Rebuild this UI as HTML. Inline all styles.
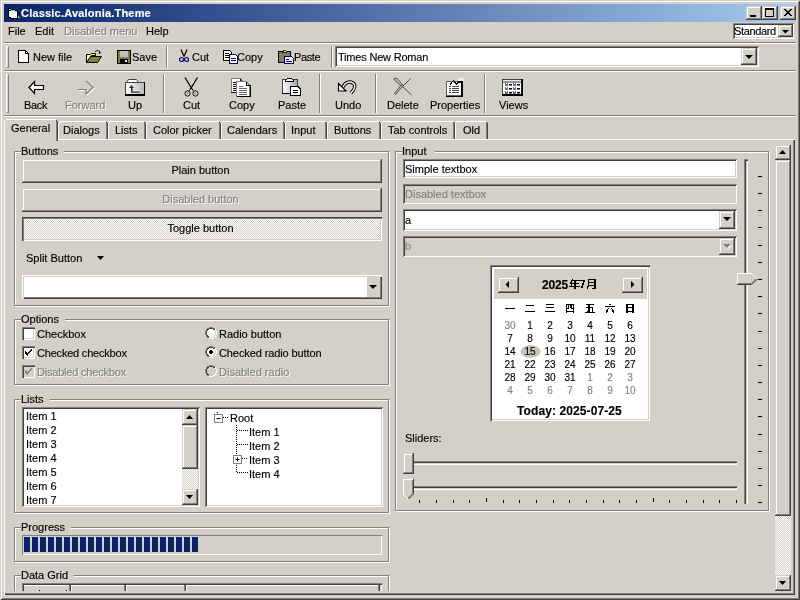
<!DOCTYPE html><html><head><meta charset="utf-8"><style>
*{box-sizing:border-box;margin:0;padding:0}
html,body{width:800px;height:600px;overflow:hidden;background:#d4d0c8}
body{position:relative;font-family:"Liberation Sans",sans-serif;font-size:11px;color:#000;line-height:1}
.a{position:absolute}
.t{position:absolute;white-space:nowrap;line-height:13px;will-change:transform;-webkit-text-stroke:0.15px currentColor}
.raised{background:#d4d0c8;box-shadow:inset -1px -1px #404040,inset 1px 1px #fff,inset -2px -2px #808080}
.raised2{background:#d4d0c8;box-shadow:inset -1px -1px #404040,inset 1px 1px #d4d0c8,inset -2px -2px #808080,inset 2px 2px #fff}
.sunken{background:#fff;box-shadow:inset 1px 1px #808080,inset -1px -1px #fff,inset 2px 2px #404040,inset -2px -2px #d4d0c8}
.etch{border:1px solid #808080;box-shadow:inset 1px 1px #fff,1px 1px #fff}
.dis{color:#808080;text-shadow:1px 1px #fff}
.gray{color:#808080}
.gl{position:absolute;background:#d4d0c8;padding:0 6px 0 0;will-change:transform;-webkit-text-stroke:0.15px currentColor;line-height:13px;white-space:nowrap}
.dither{background-color:#fff;background-image:linear-gradient(45deg,#d4d0c8 25%,transparent 25%,transparent 75%,#d4d0c8 75%),linear-gradient(45deg,#d4d0c8 25%,transparent 25%,transparent 75%,#d4d0c8 75%);background-size:2px 2px;background-position:0 0,1px 1px}
.vsep{position:absolute;width:2px;border-left:1px solid #808080;border-right:1px solid #fff}
.hsep{position:absolute;height:2px;border-top:1px solid #808080;border-bottom:1px solid #fff}
.grip{position:absolute;width:3px;border-left:1px solid #fff;border-top:1px solid #fff;border-right:1px solid #808080;border-bottom:1px solid #808080}
svg{position:absolute;overflow:visible}
</style></head><body>
<div class="a " style="left:0px;top:0px;width:800px;height:600px;box-shadow:inset 1px 1px #d4d0c8,inset -1px -1px #404040,inset 2px 2px #fff,inset -2px -2px #808080"></div>
<div class="a " style="left:4px;top:4px;width:792px;height:18px;background:linear-gradient(90deg,#0a246a,#a6caf0)"></div>
<div class="t " style="left:21px;top:7px;color:#fff;font-weight:bold;letter-spacing:0.2px">Classic.Avalonia.Theme</div>
<svg style="left:8px;top:8px" width="12" height="11" viewBox="0 0 12 11" shape-rendering="crispEdges"><rect x="0" y="0" width="1" height="1" fill="#000"/><rect x="1" y="0" width="1" height="1" fill="#000"/><rect x="2" y="0" width="1" height="1" fill="#000"/><rect x="0" y="1" width="1" height="1" fill="#000"/><rect x="1" y="1" width="1" height="1" fill="#7fd8d8"/><rect x="2" y="1" width="1" height="1" fill="#7fd8d8"/><rect x="3" y="1" width="1" height="1" fill="#000"/><rect x="4" y="1" width="1" height="1" fill="#000"/><rect x="5" y="1" width="1" height="1" fill="#000"/><rect x="6" y="1" width="1" height="1" fill="#000"/><rect x="0" y="2" width="1" height="1" fill="#000"/><rect x="1" y="2" width="1" height="1" fill="#000"/><rect x="2" y="2" width="1" height="1" fill="#000"/><rect x="3" y="2" width="1" height="1" fill="#7fd8d8"/><rect x="4" y="2" width="1" height="1" fill="#7fd8d8"/><rect x="5" y="2" width="1" height="1" fill="#7fd8d8"/><rect x="6" y="2" width="1" height="1" fill="#7fd8d8"/><rect x="7" y="2" width="1" height="1" fill="#000"/><rect x="8" y="2" width="1" height="1" fill="#000"/><rect x="0" y="3" width="1" height="1" fill="#000"/><rect x="1" y="3" width="1" height="1" fill="#fff"/><rect x="2" y="3" width="1" height="1" fill="#fff"/><rect x="3" y="3" width="1" height="1" fill="#fff"/><rect x="4" y="3" width="1" height="1" fill="#fff"/><rect x="5" y="3" width="1" height="1" fill="#fff"/><rect x="6" y="3" width="1" height="1" fill="#fff"/><rect x="7" y="3" width="1" height="1" fill="#7fd8d8"/><rect x="8" y="3" width="1" height="1" fill="#7fd8d8"/><rect x="9" y="3" width="1" height="1" fill="#000"/><rect x="0" y="4" width="1" height="1" fill="#000"/><rect x="1" y="4" width="1" height="1" fill="#fff"/><rect x="2" y="4" width="1" height="1" fill="#fff"/><rect x="3" y="4" width="1" height="1" fill="#fff"/><rect x="4" y="4" width="1" height="1" fill="#fff"/><rect x="5" y="4" width="1" height="1" fill="#fff"/><rect x="6" y="4" width="1" height="1" fill="#fff"/><rect x="7" y="4" width="1" height="1" fill="#fff"/><rect x="8" y="4" width="1" height="1" fill="#fff"/><rect x="9" y="4" width="1" height="1" fill="#000"/><rect x="0" y="5" width="1" height="1" fill="#000"/><rect x="1" y="5" width="1" height="1" fill="#fff"/><rect x="2" y="5" width="1" height="1" fill="#fff"/><rect x="3" y="5" width="1" height="1" fill="#fff"/><rect x="4" y="5" width="1" height="1" fill="#fff"/><rect x="5" y="5" width="1" height="1" fill="#fff"/><rect x="6" y="5" width="1" height="1" fill="#fff"/><rect x="7" y="5" width="1" height="1" fill="#fff"/><rect x="8" y="5" width="1" height="1" fill="#fff"/><rect x="9" y="5" width="1" height="1" fill="#000"/><rect x="0" y="6" width="1" height="1" fill="#000"/><rect x="1" y="6" width="1" height="1" fill="#fff"/><rect x="2" y="6" width="1" height="1" fill="#fff"/><rect x="3" y="6" width="1" height="1" fill="#fff"/><rect x="4" y="6" width="1" height="1" fill="#fff"/><rect x="5" y="6" width="1" height="1" fill="#fff"/><rect x="6" y="6" width="1" height="1" fill="#fff"/><rect x="7" y="6" width="1" height="1" fill="#fff"/><rect x="8" y="6" width="1" height="1" fill="#fff"/><rect x="9" y="6" width="1" height="1" fill="#000"/><rect x="0" y="7" width="1" height="1" fill="#000"/><rect x="1" y="7" width="1" height="1" fill="#fff"/><rect x="2" y="7" width="1" height="1" fill="#fff"/><rect x="3" y="7" width="1" height="1" fill="#fff"/><rect x="4" y="7" width="1" height="1" fill="#fff"/><rect x="5" y="7" width="1" height="1" fill="#fff"/><rect x="6" y="7" width="1" height="1" fill="#fff"/><rect x="7" y="7" width="1" height="1" fill="#fff"/><rect x="8" y="7" width="1" height="1" fill="#fff"/><rect x="9" y="7" width="1" height="1" fill="#000"/><rect x="0" y="8" width="1" height="1" fill="#000"/><rect x="1" y="8" width="1" height="1" fill="#fff"/><rect x="2" y="8" width="1" height="1" fill="#fff"/><rect x="3" y="8" width="1" height="1" fill="#fff"/><rect x="4" y="8" width="1" height="1" fill="#fff"/><rect x="5" y="8" width="1" height="1" fill="#fff"/><rect x="6" y="8" width="1" height="1" fill="#fff"/><rect x="7" y="8" width="1" height="1" fill="#fff"/><rect x="8" y="8" width="1" height="1" fill="#fff"/><rect x="9" y="8" width="1" height="1" fill="#000"/><rect x="10" y="8" width="1" height="1" fill="#9aa8d0"/><rect x="0" y="9" width="1" height="1" fill="#000"/><rect x="1" y="9" width="1" height="1" fill="#000"/><rect x="2" y="9" width="1" height="1" fill="#000"/><rect x="3" y="9" width="1" height="1" fill="#fff"/><rect x="4" y="9" width="1" height="1" fill="#fff"/><rect x="5" y="9" width="1" height="1" fill="#fff"/><rect x="6" y="9" width="1" height="1" fill="#fff"/><rect x="7" y="9" width="1" height="1" fill="#fff"/><rect x="8" y="9" width="1" height="1" fill="#fff"/><rect x="9" y="9" width="1" height="1" fill="#000"/><rect x="10" y="9" width="1" height="1" fill="#9aa8d0"/><rect x="11" y="9" width="1" height="1" fill="#9aa8d0"/><rect x="3" y="10" width="1" height="1" fill="#000"/><rect x="4" y="10" width="1" height="1" fill="#000"/><rect x="5" y="10" width="1" height="1" fill="#000"/><rect x="6" y="10" width="1" height="1" fill="#000"/><rect x="7" y="10" width="1" height="1" fill="#000"/><rect x="8" y="10" width="1" height="1" fill="#000"/><rect x="9" y="10" width="1" height="1" fill="#000"/></svg>
<div class="a raised2" style="left:746px;top:6px;width:16px;height:14px;"></div>
<div class="a raised2" style="left:762px;top:6px;width:16px;height:14px;"></div>
<div class="a raised2" style="left:780px;top:6px;width:16px;height:14px;"></div>
<svg style="left:746px;top:6px" width="16" height="14" viewBox="0 0 16 14" shape-rendering="crispEdges"><rect x="4" y="9" width="6" height="2" fill="#000"/></svg>
<svg style="left:762px;top:6px" width="16" height="14" viewBox="0 0 16 14" shape-rendering="crispEdges"><rect x="3.5" y="2.5" width="8" height="8" fill="none" stroke="#000"/><rect x="3" y="2" width="9" height="2" fill="#000"/></svg>
<svg style="left:780px;top:6px" width="16" height="14" viewBox="0 0 16 14" ><path d="M4 3l7 7M11 3l-7 7M5 3l7 7M12 3l-7 7" stroke="#000" stroke-width="1"/></svg>
<div class="t " style="left:8px;top:25px;">File</div>
<div class="t " style="left:35px;top:25px;">Edit</div>
<div class="t dis" style="left:64px;top:25px;">Disabled menu</div>
<div class="t " style="left:146px;top:25px;">Help</div>
<div class="a sunken" style="left:733px;top:23px;width:61px;height:16px;"></div>
<div class="t " style="left:734px;top:25px;letter-spacing:-0.35px">Standard</div>
<div class="a raised2" style="left:778px;top:25px;width:15px;height:12px;"></div>
<svg style="left:778px;top:25px" width="15" height="12" viewBox="0 0 15 12" ><path d="M4 5h7l-3.5 3.5z" fill="#000"/></svg>
<div class="hsep" style="left:4px;top:42px;width:792px"></div>
<div class="grip" style="left:6px;top:46px;height:22px"></div>
<svg style="left:18px;top:50px" width="12" height="13" viewBox="0 0 12 13" shape-rendering="crispEdges"><path d="M0.5 0.5h7l3 3v9h-10z" fill="#fff" stroke="#000"/><path d="M7.5 0.5v3h3" fill="none" stroke="#000"/></svg>
<div class="t " style="left:33px;top:51px;">New file</div>
<svg style="left:86px;top:50px" width="17" height="13" viewBox="0 0 17 13" ><path d="M0.5 4.5h4l1 -1h4v2h-4l-1 1v6h-4z" fill="#ffff99" stroke="#000"/><path d="M0.5 12.5l4-6h11l-4 6z" fill="#808040" stroke="#000"/><path d="M9 2c1-2 4-2 5 0" fill="none" stroke="#000"/><path d="M13 1l2 2l-2 1z" fill="#000"/></svg>
<svg style="left:117px;top:50px" width="14" height="14" viewBox="0 0 14 14" shape-rendering="crispEdges"><rect x="0.5" y="0.5" width="13" height="13" fill="#808040" stroke="#000"/><rect x="3" y="1" width="8" height="6" fill="#c0c0c0"/><rect x="3" y="9" width="8" height="4" fill="#000"/><rect x="8" y="10" width="2" height="2" fill="#fff"/></svg>
<div class="t " style="left:132px;top:51px;">Save</div>
<div class="vsep" style="left:166px;top:46px;height:22px"></div>
<svg style="left:179px;top:49px" width="10" height="14" viewBox="0 0 10 14" ><path d="M2 0.5l3 7M8 0.5l-3 7" stroke="#000" stroke-width="1.2"/><circle cx="2.5" cy="10.5" r="2" fill="none" stroke="#000080" stroke-width="1.2"/><circle cx="7.5" cy="10.5" r="2" fill="none" stroke="#000080" stroke-width="1.2"/></svg>
<div class="t " style="left:192px;top:51px;">Cut</div>
<svg style="left:223px;top:50px" width="16" height="14" viewBox="0 0 16 14" shape-rendering="crispEdges"><path d="M0.5 0.5h6l2 2v8h-8z" fill="#fff" stroke="#000"/><path d="M2 3h4M2 5h4M2 7h4" stroke="#000"/><path d="M6.5 4.5h6l2 2v7h-8z" fill="#fff" stroke="#000080"/><path d="M8 8h5M8 10h5" stroke="#000080"/></svg>
<div class="t " style="left:237px;top:51px;">Copy</div>
<svg style="left:278px;top:50px" width="17" height="14" viewBox="0 0 17 14" shape-rendering="crispEdges"><rect x="0.5" y="1.5" width="12" height="11" fill="#808060" stroke="#000"/><path d="M4 2.5h5l-1-2h-3z" fill="#ffffc0" stroke="#000" stroke-width="0.8"/><path d="M6.5 6.5h7l2 2v5h-9z" fill="#fff" stroke="#000080"/><path d="M8 9h3M8 11h6" stroke="#000080"/></svg>
<div class="t " style="left:294px;top:51px;letter-spacing:-0.4px">Paste</div>
<div class="vsep" style="left:331px;top:46px;height:22px"></div>
<div class="a sunken" style="left:335px;top:46px;width:424px;height:21px;"></div>
<div class="t " style="left:338px;top:51px;letter-spacing:-0.2px">Times New Roman</div>
<div class="a raised2" style="left:741px;top:48px;width:16px;height:17px;"></div>
<svg style="left:741px;top:48px" width="16" height="17" viewBox="0 0 16 17" ><path d="M4 7h8l-4 4z" fill="#000"/></svg>
<div class="hsep" style="left:4px;top:70px;width:792px"></div>
<div class="grip" style="left:6px;top:74px;height:39px"></div>
<svg style="left:28px;top:80px" width="16" height="15" viewBox="0 0 16 15" ><path d="M1 7.5l5.5-6v4h9v4h-9v4z" fill="#fff" stroke="#000" stroke-width="1.2"/></svg>
<div class="t " style="left:24px;top:99px;letter-spacing:-0.3px">Back</div>
<svg style="left:77px;top:80px" width="17" height="15" viewBox="0 0 17 15" ><path d="M1 9.5h8v4.5l7-6.5-7-6.5" fill="none" stroke="#fff" stroke-width="1.2" transform="translate(1,1)"/><path d="M1 9.5h8v4.5l7-6.5-7-6.5" fill="none" stroke="#808080" stroke-width="1.2"/></svg>
<div class="t dis" style="left:65px;top:99px;">Forward</div>
<svg style="left:125px;top:79px" width="21" height="17" viewBox="0 0 21 17" ><defs><linearGradient id="gu" x1="0" x2="1"><stop offset="0" stop-color="#fff"/><stop offset="1" stop-color="#b8b8b8"/></linearGradient></defs><path d="M1.5 3.5l2-3h8l2 3" fill="#fff" stroke="#404040"/><rect x="0.5" y="3.5" width="19" height="12" fill="url(#gu)" stroke="#404040"/><rect x="0" y="15" width="20" height="2" fill="#000"/><rect x="19" y="3" width="1" height="13" fill="#000"/><path d="M6.5 6L4 9h5z" fill="#333"/><rect x="6" y="9" width="1.5" height="4" fill="#333"/><rect x="6" y="12.5" width="8.5" height="1.2" fill="#333"/></svg>
<div class="t " style="left:128px;top:99px;">Up</div>
<div class="vsep" style="left:163px;top:74px;height:39px"></div>
<svg style="left:183px;top:77px" width="16" height="20" viewBox="0 0 16 20" ><path d="M2 0.5l7 11.5M14.5 0.5l-7 11.5" stroke="#000" stroke-width="1.3"/><path d="M7.8 11.5l-2 2.5M8.7 11.5l2 2.5" stroke="#000"/><circle cx="4.5" cy="16.5" r="2.6" fill="#fff" stroke="#000" stroke-width="1"/><circle cx="12.5" cy="16.5" r="2.6" fill="#fff" stroke="#000" stroke-width="1"/><rect x="3.5" y="15.5" width="2" height="2" fill="#777"/><rect x="11.5" y="15.5" width="2" height="2" fill="#777"/></svg>
<div class="t " style="left:183px;top:99px;">Cut</div>
<svg style="left:231px;top:78px" width="21" height="19" viewBox="0 0 21 19" shape-rendering="crispEdges"><path d="M0.5 0.5h8.5l3 3v10.5h-11.5z" fill="#fff" stroke="#808080"/><rect x="0" y="14" width="6" height="1" fill="#000"/><path d="M9 0.5v3h3" fill="none" stroke="#000"/><path d="M2 4.5h5M2 6.5h5M2 8.5h5M2 10.5h5M2 12.5h5" stroke="#000"/><path d="M5.5 3.5h9.5l3.5 3.5v11h-13z" fill="#fff" stroke="#808080"/><path d="M15 3.5v3.5h3.5" fill="none" stroke="#000"/><rect x="19" y="7" width="1.2" height="12" fill="#000"/><rect x="6" y="18" width="14" height="1.2" fill="#000"/><path d="M8 8.5h4M8 10.5h8M8 12.5h8M8 14.5h8M8 16.5h8" stroke="#666"/></svg>
<div class="t " style="left:229px;top:99px;">Copy</div>
<svg style="left:282px;top:78px" width="20" height="18" viewBox="0 0 20 18" shape-rendering="crispEdges"><defs><linearGradient id="gp" x1="0" x2="1"><stop offset="0" stop-color="#fff"/><stop offset="1" stop-color="#a8a8a8"/></linearGradient></defs><rect x="0.5" y="1.5" width="14.5" height="13.5" fill="url(#gp)" stroke="#404040"/><rect x="0" y="14.5" width="15.5" height="1" fill="#000"/><path d="M3.5 3.5v-1l2-2h4l2 2v1z" fill="#fff" stroke="#000"/><path d="M8.5 8.5h7.5l2 2v7h-9.5z" fill="#fff" stroke="#000"/><path d="M10.5 12h5M10.5 14h5" stroke="#000"/></svg>
<div class="t " style="left:278px;top:99px;">Paste</div>
<div class="vsep" style="left:319px;top:74px;height:39px"></div>
<svg style="left:337px;top:79px" width="20" height="16" viewBox="0 0 20 16" ><path d="M6 8c2-5 7-6 10-4 3 2 2 6-2 10" fill="none" stroke="#000" stroke-width="3.4"/><path d="M6 8c2-5 7-6 10-4 3 2 2 6-2 10" fill="none" stroke="#fff" stroke-width="1.4"/><path d="M1.5 4.5v7.5h7.5z" fill="#fff" stroke="#000" stroke-width="1.2"/></svg>
<div class="t " style="left:335px;top:99px;">Undo</div>
<div class="vsep" style="left:375px;top:74px;height:39px"></div>
<svg style="left:393px;top:77px" width="20" height="19" viewBox="0 0 20 19" ><path d="M9.5 9.5l9 8.5" stroke="#444" stroke-width="1"/><path d="M9.5 9.5l8-8" stroke="#444" stroke-width="1"/><path d="M1 1.5c1.5-1 3 0 4 1l5.5 6.5-1 1-6.5-5.5c-1-1-2.5-2-2-3z" fill="#bbb" stroke="#444" stroke-width="0.9"/><path d="M9.5 9.5l-7 8-1-1 6.5-8.5z" fill="#bbb" stroke="#444" stroke-width="0.9"/></svg>
<div class="t " style="left:387px;top:99px;">Delete</div>
<svg style="left:446px;top:78px" width="19" height="19" viewBox="0 0 19 19" shape-rendering="crispEdges"><rect x="0.5" y="3.5" width="15" height="14" fill="#fff" stroke="#606060"/><rect x="15" y="4" width="1.5" height="15" fill="#000"/><rect x="0" y="17.5" width="16.5" height="1.5" fill="#000"/><path d="M4 6.5l3.5-4 3 3.5 2-2h4.5" fill="none" stroke="#000" stroke-width="1.1"/><rect x="12" y="0" width="6" height="3" fill="#f0f0f0"/><path d="M3 8.5h2M6 8.5h7M3 10.5h2M6 10.5h7M3 12.5h2M6 12.5h7M3 14.5h2M6 14.5h7" stroke="#444"/></svg>
<div class="t " style="left:430px;top:99px;">Properties</div>
<div class="vsep" style="left:484px;top:74px;height:39px"></div>
<svg style="left:502px;top:79px" width="21" height="17" viewBox="0 0 21 17" ><rect x="0.5" y="0.5" width="19" height="15" fill="#fff" stroke="#404040"/><rect x="1" y="1" width="18" height="1" fill="#e8e8e8"/><rect x="1" y="2" width="18" height="1" fill="#a0a0a0"/><rect x="1" y="3" width="18" height="0.6" fill="#404040"/><rect x="19.5" y="0" width="1.5" height="17" fill="#000"/><rect x="0" y="15" width="21" height="2" fill="#000"/><rect x="3" y="4" width="3" height="3" fill="#707070"/><rect x="4" y="4" width="1" height="1" fill="#fff"/><rect x="7" y="5" width="3" height="1.5" fill="#000"/><rect x="3" y="8" width="3" height="3" fill="#707070"/><rect x="4" y="8" width="1" height="1" fill="#fff"/><rect x="7" y="9" width="3" height="1.5" fill="#000"/><rect x="3" y="12" width="3" height="3" fill="#707070"/><rect x="4" y="12" width="1" height="1" fill="#fff"/><rect x="7" y="13" width="3" height="1.5" fill="#000"/><rect x="11" y="4" width="3" height="3" fill="#707070"/><rect x="12" y="4" width="1" height="1" fill="#fff"/><rect x="15" y="5" width="3" height="1.5" fill="#000"/><rect x="11" y="8" width="3" height="3" fill="#707070"/><rect x="12" y="8" width="1" height="1" fill="#fff"/><rect x="15" y="9" width="3" height="1.5" fill="#000"/><rect x="11" y="12" width="3" height="3" fill="#707070"/><rect x="12" y="12" width="1" height="1" fill="#fff"/><rect x="15" y="13" width="3" height="1.5" fill="#000"/></svg>
<div class="t " style="left:499px;top:99px;">Views</div>
<div class="hsep" style="left:4px;top:115px;width:792px"></div>
<svg style="left:58px;top:121px" width="50" height="18" viewBox="0 0 50 18" shape-rendering="crispEdges"><rect x="0" y="2" width="1" height="16" fill="#fff"/><rect x="1" y="1" width="1" height="1" fill="#fff"/><rect x="2" y="0" width="46" height="1" fill="#fff"/><rect x="48" y="1" width="1" height="1" fill="#404040"/><rect x="48" y="2" width="1" height="16" fill="#808080"/><rect x="49" y="2" width="1" height="16" fill="#404040"/></svg>
<div class="t " style="left:63px;top:124px;">Dialogs</div>
<svg style="left:108px;top:121px" width="38" height="18" viewBox="0 0 38 18" shape-rendering="crispEdges"><rect x="0" y="2" width="1" height="16" fill="#fff"/><rect x="1" y="1" width="1" height="1" fill="#fff"/><rect x="2" y="0" width="34" height="1" fill="#fff"/><rect x="36" y="1" width="1" height="1" fill="#404040"/><rect x="36" y="2" width="1" height="16" fill="#808080"/><rect x="37" y="2" width="1" height="16" fill="#404040"/></svg>
<div class="t " style="left:115px;top:124px;">Lists</div>
<svg style="left:146px;top:121px" width="75" height="18" viewBox="0 0 75 18" shape-rendering="crispEdges"><rect x="0" y="2" width="1" height="16" fill="#fff"/><rect x="1" y="1" width="1" height="1" fill="#fff"/><rect x="2" y="0" width="71" height="1" fill="#fff"/><rect x="73" y="1" width="1" height="1" fill="#404040"/><rect x="73" y="2" width="1" height="16" fill="#808080"/><rect x="74" y="2" width="1" height="16" fill="#404040"/></svg>
<div class="t " style="left:153px;top:124px;">Color picker</div>
<svg style="left:221px;top:121px" width="64" height="18" viewBox="0 0 64 18" shape-rendering="crispEdges"><rect x="0" y="2" width="1" height="16" fill="#fff"/><rect x="1" y="1" width="1" height="1" fill="#fff"/><rect x="2" y="0" width="60" height="1" fill="#fff"/><rect x="62" y="1" width="1" height="1" fill="#404040"/><rect x="62" y="2" width="1" height="16" fill="#808080"/><rect x="63" y="2" width="1" height="16" fill="#404040"/></svg>
<div class="t " style="left:227px;top:124px;">Calendars</div>
<svg style="left:285px;top:121px" width="42" height="18" viewBox="0 0 42 18" shape-rendering="crispEdges"><rect x="0" y="2" width="1" height="16" fill="#fff"/><rect x="1" y="1" width="1" height="1" fill="#fff"/><rect x="2" y="0" width="38" height="1" fill="#fff"/><rect x="40" y="1" width="1" height="1" fill="#404040"/><rect x="40" y="2" width="1" height="16" fill="#808080"/><rect x="41" y="2" width="1" height="16" fill="#404040"/></svg>
<div class="t " style="left:291px;top:124px;">Input</div>
<svg style="left:327px;top:121px" width="54" height="18" viewBox="0 0 54 18" shape-rendering="crispEdges"><rect x="0" y="2" width="1" height="16" fill="#fff"/><rect x="1" y="1" width="1" height="1" fill="#fff"/><rect x="2" y="0" width="50" height="1" fill="#fff"/><rect x="52" y="1" width="1" height="1" fill="#404040"/><rect x="52" y="2" width="1" height="16" fill="#808080"/><rect x="53" y="2" width="1" height="16" fill="#404040"/></svg>
<div class="t " style="left:334px;top:124px;">Buttons</div>
<svg style="left:381px;top:121px" width="74" height="18" viewBox="0 0 74 18" shape-rendering="crispEdges"><rect x="0" y="2" width="1" height="16" fill="#fff"/><rect x="1" y="1" width="1" height="1" fill="#fff"/><rect x="2" y="0" width="70" height="1" fill="#fff"/><rect x="72" y="1" width="1" height="1" fill="#404040"/><rect x="72" y="2" width="1" height="16" fill="#808080"/><rect x="73" y="2" width="1" height="16" fill="#404040"/></svg>
<div class="t " style="left:388px;top:124px;">Tab controls</div>
<svg style="left:455px;top:121px" width="33" height="18" viewBox="0 0 33 18" shape-rendering="crispEdges"><rect x="0" y="2" width="1" height="16" fill="#fff"/><rect x="1" y="1" width="1" height="1" fill="#fff"/><rect x="2" y="0" width="29" height="1" fill="#fff"/><rect x="31" y="1" width="1" height="1" fill="#404040"/><rect x="31" y="2" width="1" height="16" fill="#808080"/><rect x="32" y="2" width="1" height="16" fill="#404040"/></svg>
<div class="t " style="left:463px;top:124px;">Old</div>
<div class="a" style="left:4px;top:139px;width:791px;height:456px;border-top:1px solid #fff;border-left:1px solid #fff;box-shadow:inset -1px -1px #404040,inset -2px -2px #808080"></div>
<svg style="left:4px;top:119px" width="54" height="22" viewBox="0 0 54 22" shape-rendering="crispEdges"><rect x="0" y="0" width="54" height="22" fill="#d4d0c8"/><rect x="0" y="2" width="1" height="20" fill="#fff"/><rect x="1" y="1" width="1" height="1" fill="#fff"/><rect x="2" y="0" width="50" height="1" fill="#fff"/><rect x="52" y="1" width="1" height="1" fill="#404040"/><rect x="52" y="2" width="1" height="20" fill="#808080"/><rect x="53" y="2" width="1" height="20" fill="#404040"/></svg>
<div class="t " style="left:11px;top:122px;">General</div>
<div class="a" style="left:0;top:0;width:800px;height:600px;clip-path:inset(140px 6px 9px 5px)">
<div class="a etch" style="left:14px;top:151px;width:375px;height:155px;"></div>
<div class="gl" style="left:21px;top:145px;padding-right:6px">Buttons</div>
<div class="a etch" style="left:14px;top:319px;width:375px;height:66px;"></div>
<div class="gl" style="left:21px;top:313px;padding-right:6px">Options</div>
<div class="a etch" style="left:14px;top:399px;width:375px;height:114px;"></div>
<div class="gl" style="left:21px;top:393px;padding-right:6px">Lists</div>
<div class="a etch" style="left:14px;top:527px;width:375px;height:35px;"></div>
<div class="gl" style="left:21px;top:521px;padding-right:6px">Progress</div>
<div class="a etch" style="left:14px;top:575px;width:375px;height:40px;"></div>
<div class="gl" style="left:21px;top:569px;padding-right:6px">Data Grid</div>
<div class="a etch" style="left:395px;top:151px;width:374px;height:360px;"></div>
<div class="gl" style="left:402px;top:145px;padding-right:9px">Input</div>
<div class="a raised2" style="left:22px;top:159px;width:360px;height:24px;"></div>
<div class="t " style="left:22px;top:164px;width:357px;text-align:center">Plain button</div>
<div class="a raised2" style="left:22px;top:188px;width:360px;height:24px;"></div>
<div class="t dis" style="left:22px;top:193px;width:357px;text-align:center">Disabled button</div>
<div class="a dither" style="left:22px;top:217px;width:360px;height:24px;box-shadow:inset 1px 1px #404040,inset 2px 2px #808080,inset -1px -1px #fff,inset -2px -2px #d4d0c8"></div>
<div class="t " style="left:22px;top:222px;width:357px;text-align:center">Toggle button</div>
<div class="t " style="left:26px;top:252px;">Split Button</div>
<svg style="left:97px;top:256px" width="8" height="5" viewBox="0 0 8 5" ><path d="M0 0h7l-3.5 4z" fill="#000"/></svg>
<div class="a " style="left:22px;top:275px;width:360px;height:24px;background:#fff;box-shadow:inset 1px 1px #fff,inset 2px 2px #d4d0c8,inset -1px -1px #404040,inset -2px -2px #808080"></div>
<div class="a " style="left:367px;top:277px;width:13px;height:20px;background:#d4d0c8"></div>
<svg style="left:369px;top:285px" width="8" height="5" viewBox="0 0 8 5" ><path d="M0 0h8l-4 4z" fill="#000"/></svg>
<div class="a " style="left:22px;top:327px;width:13px;height:13px;background:#fff;box-shadow:inset 1px 1px #808080,inset 2px 2px #404040,inset -1px -1px #fff,inset -2px -2px #d4d0c8"></div>
<div class="t " style="left:37px;top:328px;">Checkbox</div>
<div class="a " style="left:22px;top:346px;width:13px;height:13px;background:#fff;box-shadow:inset 1px 1px #808080,inset 2px 2px #404040,inset -1px -1px #fff,inset -2px -2px #d4d0c8"></div>
<svg style="left:22px;top:346px" width="13" height="13" viewBox="0 0 13 13" shape-rendering="crispEdges"><rect x="9" y="3" width="1" height="1" fill="#000"/><rect x="8" y="4" width="1" height="1" fill="#000"/><rect x="9" y="4" width="1" height="1" fill="#000"/><rect x="3" y="5" width="1" height="1" fill="#000"/><rect x="7" y="5" width="1" height="1" fill="#000"/><rect x="8" y="5" width="1" height="1" fill="#000"/><rect x="3" y="6" width="1" height="1" fill="#000"/><rect x="4" y="6" width="1" height="1" fill="#000"/><rect x="6" y="6" width="1" height="1" fill="#000"/><rect x="7" y="6" width="1" height="1" fill="#000"/><rect x="3" y="7" width="1" height="1" fill="#000"/><rect x="4" y="7" width="1" height="1" fill="#000"/><rect x="5" y="7" width="1" height="1" fill="#000"/><rect x="6" y="7" width="1" height="1" fill="#000"/><rect x="4" y="8" width="1" height="1" fill="#000"/><rect x="5" y="8" width="1" height="1" fill="#000"/><rect x="5" y="9" width="1" height="1" fill="#000"/></svg>
<div class="t " style="left:37px;top:347px;letter-spacing:-0.2px">Checked checkbox</div>
<div class="a " style="left:22px;top:365px;width:13px;height:13px;background:#d4d0c8;box-shadow:inset 1px 1px #808080,inset 2px 2px #404040,inset -1px -1px #fff,inset -2px -2px #d4d0c8"></div>
<svg style="left:22px;top:365px" width="13" height="13" viewBox="0 0 13 13" shape-rendering="crispEdges"><rect x="9" y="3" width="1" height="1" fill="#808080"/><rect x="8" y="4" width="1" height="1" fill="#808080"/><rect x="9" y="4" width="1" height="1" fill="#808080"/><rect x="3" y="5" width="1" height="1" fill="#808080"/><rect x="7" y="5" width="1" height="1" fill="#808080"/><rect x="8" y="5" width="1" height="1" fill="#808080"/><rect x="3" y="6" width="1" height="1" fill="#808080"/><rect x="4" y="6" width="1" height="1" fill="#808080"/><rect x="6" y="6" width="1" height="1" fill="#808080"/><rect x="7" y="6" width="1" height="1" fill="#808080"/><rect x="3" y="7" width="1" height="1" fill="#808080"/><rect x="4" y="7" width="1" height="1" fill="#808080"/><rect x="5" y="7" width="1" height="1" fill="#808080"/><rect x="6" y="7" width="1" height="1" fill="#808080"/><rect x="4" y="8" width="1" height="1" fill="#808080"/><rect x="5" y="8" width="1" height="1" fill="#808080"/><rect x="5" y="9" width="1" height="1" fill="#808080"/></svg>
<div class="t dis" style="left:37px;top:366px;letter-spacing:-0.2px">Disabled checkbox</div>
<svg style="left:205px;top:327px" width="12" height="12" viewBox="0 0 12 12" shape-rendering="crispEdges"><rect x="2" y="2" width="8" height="8" fill="#fff"/><rect x="3" y="1" width="6" height="10" fill="#fff"/><rect x="1" y="3" width="10" height="6" fill="#fff"/><rect x="4" y="0" width="4" height="1" fill="#808080"/><rect x="2" y="1" width="2" height="1" fill="#808080"/><rect x="8" y="1" width="2" height="1" fill="#808080"/><rect x="1" y="2" width="1" height="2" fill="#808080"/><rect x="0" y="4" width="1" height="4" fill="#808080"/><rect x="1" y="8" width="1" height="2" fill="#808080"/><rect x="2" y="10" width="2" height="1" fill="#808080"/><rect x="10" y="2" width="1" height="2" fill="#fff"/><rect x="11" y="4" width="1" height="4" fill="#fff"/><rect x="10" y="8" width="1" height="2" fill="#fff"/><rect x="8" y="10" width="2" height="1" fill="#fff"/><rect x="4" y="11" width="4" height="1" fill="#fff"/><rect x="4" y="1" width="4" height="1" fill="#404040"/><rect x="2" y="2" width="2" height="1" fill="#404040"/><rect x="8" y="2" width="2" height="1" fill="#404040"/><rect x="2" y="3" width="1" height="1" fill="#404040"/><rect x="1" y="4" width="1" height="4" fill="#404040"/><rect x="2" y="8" width="1" height="1" fill="#404040"/><rect x="2" y="9" width="2" height="1" fill="#404040"/><rect x="9" y="3" width="1" height="1" fill="#d4d0c8"/><rect x="10" y="4" width="1" height="4" fill="#d4d0c8"/><rect x="9" y="8" width="1" height="1" fill="#d4d0c8"/><rect x="8" y="9" width="2" height="1" fill="#d4d0c8"/><rect x="4" y="10" width="4" height="1" fill="#d4d0c8"/></svg>
<div class="t " style="left:219px;top:328px;">Radio button</div>
<svg style="left:205px;top:346px" width="12" height="12" viewBox="0 0 12 12" shape-rendering="crispEdges"><rect x="2" y="2" width="8" height="8" fill="#fff"/><rect x="3" y="1" width="6" height="10" fill="#fff"/><rect x="1" y="3" width="10" height="6" fill="#fff"/><rect x="4" y="0" width="4" height="1" fill="#808080"/><rect x="2" y="1" width="2" height="1" fill="#808080"/><rect x="8" y="1" width="2" height="1" fill="#808080"/><rect x="1" y="2" width="1" height="2" fill="#808080"/><rect x="0" y="4" width="1" height="4" fill="#808080"/><rect x="1" y="8" width="1" height="2" fill="#808080"/><rect x="2" y="10" width="2" height="1" fill="#808080"/><rect x="10" y="2" width="1" height="2" fill="#fff"/><rect x="11" y="4" width="1" height="4" fill="#fff"/><rect x="10" y="8" width="1" height="2" fill="#fff"/><rect x="8" y="10" width="2" height="1" fill="#fff"/><rect x="4" y="11" width="4" height="1" fill="#fff"/><rect x="4" y="1" width="4" height="1" fill="#404040"/><rect x="2" y="2" width="2" height="1" fill="#404040"/><rect x="8" y="2" width="2" height="1" fill="#404040"/><rect x="2" y="3" width="1" height="1" fill="#404040"/><rect x="1" y="4" width="1" height="4" fill="#404040"/><rect x="2" y="8" width="1" height="1" fill="#404040"/><rect x="2" y="9" width="2" height="1" fill="#404040"/><rect x="9" y="3" width="1" height="1" fill="#d4d0c8"/><rect x="10" y="4" width="1" height="4" fill="#d4d0c8"/><rect x="9" y="8" width="1" height="1" fill="#d4d0c8"/><rect x="8" y="9" width="2" height="1" fill="#d4d0c8"/><rect x="4" y="10" width="4" height="1" fill="#d4d0c8"/><rect x="5" y="4" width="2" height="1" fill="#000"/><rect x="4" y="5" width="4" height="2" fill="#000"/><rect x="5" y="7" width="2" height="1" fill="#000"/></svg>
<div class="t " style="left:219px;top:347px;letter-spacing:-0.1px">Checked radio button</div>
<svg style="left:205px;top:365px" width="12" height="12" viewBox="0 0 12 12" shape-rendering="crispEdges"><rect x="2" y="2" width="8" height="8" fill="#d4d0c8"/><rect x="3" y="1" width="6" height="10" fill="#d4d0c8"/><rect x="1" y="3" width="10" height="6" fill="#d4d0c8"/><rect x="4" y="0" width="4" height="1" fill="#808080"/><rect x="2" y="1" width="2" height="1" fill="#808080"/><rect x="8" y="1" width="2" height="1" fill="#808080"/><rect x="1" y="2" width="1" height="2" fill="#808080"/><rect x="0" y="4" width="1" height="4" fill="#808080"/><rect x="1" y="8" width="1" height="2" fill="#808080"/><rect x="2" y="10" width="2" height="1" fill="#808080"/><rect x="10" y="2" width="1" height="2" fill="#fff"/><rect x="11" y="4" width="1" height="4" fill="#fff"/><rect x="10" y="8" width="1" height="2" fill="#fff"/><rect x="8" y="10" width="2" height="1" fill="#fff"/><rect x="4" y="11" width="4" height="1" fill="#fff"/><rect x="4" y="1" width="4" height="1" fill="#404040"/><rect x="2" y="2" width="2" height="1" fill="#404040"/><rect x="8" y="2" width="2" height="1" fill="#404040"/><rect x="2" y="3" width="1" height="1" fill="#404040"/><rect x="1" y="4" width="1" height="4" fill="#404040"/><rect x="2" y="8" width="1" height="1" fill="#404040"/><rect x="2" y="9" width="2" height="1" fill="#404040"/><rect x="9" y="3" width="1" height="1" fill="#d4d0c8"/><rect x="10" y="4" width="1" height="4" fill="#d4d0c8"/><rect x="9" y="8" width="1" height="1" fill="#d4d0c8"/><rect x="8" y="9" width="2" height="1" fill="#d4d0c8"/><rect x="4" y="10" width="4" height="1" fill="#d4d0c8"/></svg>
<div class="t dis" style="left:219px;top:366px;">Disabled radio</div>
<div class="a sunken" style="left:22px;top:407px;width:178px;height:100px;"></div>
<div class="t " style="left:26px;top:410px;">Item 1</div>
<div class="t " style="left:26px;top:424px;">Item 2</div>
<div class="t " style="left:26px;top:438px;">Item 3</div>
<div class="t " style="left:26px;top:452px;">Item 4</div>
<div class="t " style="left:26px;top:466px;">Item 5</div>
<div class="t " style="left:26px;top:480px;">Item 6</div>
<div class="t " style="left:26px;top:494px;">Item 7</div>
<div class="a dither" style="left:182px;top:409px;width:16px;height:96px;"></div>
<div class="a raised2" style="left:182px;top:409px;width:16px;height:16px;"></div>
<svg style="left:182px;top:409px" width="16" height="16" viewBox="0 0 16 16" ><path d="M4 10h7l-3.5-4z" fill="#000"/></svg>
<div class="a raised2" style="left:182px;top:425px;width:16px;height:44px;"></div>
<div class="a raised2" style="left:182px;top:489px;width:16px;height:16px;"></div>
<svg style="left:182px;top:489px" width="16" height="16" viewBox="0 0 16 16" ><path d="M4 6h7l-3.5 4z" fill="#000"/></svg>
<div class="a sunken" style="left:205px;top:407px;width:178px;height:100px;"></div>
<svg style="left:205px;top:407px" width="178" height="100" viewBox="0 0 178 100" ><g stroke="#000" stroke-dasharray="1 1" fill="none"><path d="M12.5 5v2M31.5 18v48M32 23.5h11M32 37.5h11M37 51.5h6M32 65.5h11M18 10.5h6"/></g><rect x="9.5" y="7.5" width="8" height="8" fill="#fff" stroke="#808080"/><path d="M11.5 11.5h4" stroke="#000"/><rect x="28.5" y="48.5" width="8" height="8" fill="#fff" stroke="#808080"/><path d="M30.5 52.5h4M32.5 50.5v4" stroke="#000"/></svg>
<div class="t " style="left:230px;top:412px;">Root</div>
<div class="t " style="left:249px;top:426px;">Item 1</div>
<div class="t " style="left:249px;top:440px;">Item 2</div>
<div class="t " style="left:249px;top:454px;">Item 3</div>
<div class="t " style="left:249px;top:468px;">Item 4</div>
<div class="a " style="left:22px;top:535px;width:360px;height:20px;box-shadow:inset 1px 1px #808080,inset -1px -1px #fff"></div>
<div class="a " style="left:24px;top:537px;width:6px;height:15px;background:#0a246a"></div>
<div class="a " style="left:32px;top:537px;width:6px;height:15px;background:#0a246a"></div>
<div class="a " style="left:40px;top:537px;width:6px;height:15px;background:#0a246a"></div>
<div class="a " style="left:48px;top:537px;width:6px;height:15px;background:#0a246a"></div>
<div class="a " style="left:56px;top:537px;width:6px;height:15px;background:#0a246a"></div>
<div class="a " style="left:64px;top:537px;width:6px;height:15px;background:#0a246a"></div>
<div class="a " style="left:72px;top:537px;width:6px;height:15px;background:#0a246a"></div>
<div class="a " style="left:80px;top:537px;width:6px;height:15px;background:#0a246a"></div>
<div class="a " style="left:88px;top:537px;width:6px;height:15px;background:#0a246a"></div>
<div class="a " style="left:96px;top:537px;width:6px;height:15px;background:#0a246a"></div>
<div class="a " style="left:104px;top:537px;width:6px;height:15px;background:#0a246a"></div>
<div class="a " style="left:112px;top:537px;width:6px;height:15px;background:#0a246a"></div>
<div class="a " style="left:120px;top:537px;width:6px;height:15px;background:#0a246a"></div>
<div class="a " style="left:128px;top:537px;width:6px;height:15px;background:#0a246a"></div>
<div class="a " style="left:136px;top:537px;width:6px;height:15px;background:#0a246a"></div>
<div class="a " style="left:144px;top:537px;width:6px;height:15px;background:#0a246a"></div>
<div class="a " style="left:152px;top:537px;width:6px;height:15px;background:#0a246a"></div>
<div class="a " style="left:160px;top:537px;width:6px;height:15px;background:#0a246a"></div>
<div class="a " style="left:168px;top:537px;width:6px;height:15px;background:#0a246a"></div>
<div class="a " style="left:176px;top:537px;width:6px;height:15px;background:#0a246a"></div>
<div class="a " style="left:184px;top:537px;width:6px;height:15px;background:#0a246a"></div>
<div class="a " style="left:192px;top:537px;width:6px;height:15px;background:#0a246a"></div>
<div class="a " style="left:22px;top:583px;width:360px;height:20px;box-shadow:inset 1px 1px #808080,inset 2px 2px #404040,inset -1px 0 #fff,inset -2px 0 #d4d0c8"></div>
<div class="a " style="left:24px;top:585px;width:355px;height:10px;border-top:1px solid #fff"></div>
<div class="a " style="left:70px;top:585px;width:1px;height:6px;background:#404040"></div>
<div class="a " style="left:69px;top:585px;width:1px;height:6px;background:#808080"></div>
<div class="a " style="left:71px;top:585px;width:1px;height:6px;background:#fff"></div>
<div class="a " style="left:125px;top:585px;width:1px;height:6px;background:#404040"></div>
<div class="a " style="left:124px;top:585px;width:1px;height:6px;background:#808080"></div>
<div class="a " style="left:126px;top:585px;width:1px;height:6px;background:#fff"></div>
<div class="a " style="left:185px;top:585px;width:1px;height:6px;background:#404040"></div>
<div class="a " style="left:184px;top:585px;width:1px;height:6px;background:#808080"></div>
<div class="a " style="left:186px;top:585px;width:1px;height:6px;background:#fff"></div>
<div class="a " style="left:379px;top:585px;width:1px;height:6px;background:#404040"></div>
<div class="a " style="left:378px;top:585px;width:1px;height:6px;background:#808080"></div>
<div class="a " style="left:39px;top:590px;width:1px;height:1px;background:#000"></div>
<div class="a " style="left:66px;top:590px;width:1px;height:1px;background:#000"></div>
<div class="a sunken" style="left:403px;top:159px;width:334px;height:19px;"></div>
<div class="t " style="left:405px;top:163px;">Simple textbox</div>
<div class="a sunken" style="left:403px;top:184px;width:334px;height:20px;background:#d4d0c8"></div>
<div class="t gray" style="left:405px;top:188px;">Disabled textbox</div>
<div class="a sunken" style="left:403px;top:209px;width:334px;height:22px;"></div>
<div class="t " style="left:405px;top:214px;">a</div>
<div class="a raised2" style="left:719px;top:211px;width:16px;height:18px;"></div>
<svg style="left:719px;top:211px" width="16" height="17" viewBox="0 0 16 17" ><path d="M4 6h8l-4 4z" fill="#000"/></svg>
<div class="a sunken" style="left:403px;top:236px;width:334px;height:21px;background:#d4d0c8"></div>
<div class="t gray" style="left:405px;top:240px;">b</div>
<div class="a raised2" style="left:719px;top:238px;width:16px;height:17px;"></div>
<svg style="left:719px;top:238px" width="16" height="17" viewBox="0 0 16 17" ><path d="M5 7h8l-4 4z" fill="#fff"/><path d="M4 6h8l-4 4z" fill="#808080"/></svg>
<div class="a " style="left:744px;top:159px;width:4px;height:345px;box-shadow:inset 1px 1px #808080,inset 2px 2px #404040,inset -1px -1px #fff,inset -2px -2px #d4d0c8"></div>
<div class="a " style="left:758px;top:176px;width:4px;height:1px;background:#000"></div>
<div class="a " style="left:758px;top:193px;width:4px;height:1px;background:#000"></div>
<div class="a " style="left:758px;top:210px;width:4px;height:1px;background:#000"></div>
<div class="a " style="left:758px;top:227px;width:4px;height:1px;background:#000"></div>
<div class="a " style="left:758px;top:245px;width:4px;height:1px;background:#000"></div>
<div class="a " style="left:758px;top:262px;width:4px;height:1px;background:#000"></div>
<div class="a " style="left:758px;top:279px;width:4px;height:1px;background:#000"></div>
<div class="a " style="left:758px;top:296px;width:4px;height:1px;background:#000"></div>
<div class="a " style="left:758px;top:313px;width:4px;height:1px;background:#000"></div>
<div class="a " style="left:758px;top:331px;width:4px;height:1px;background:#000"></div>
<div class="a " style="left:758px;top:348px;width:4px;height:1px;background:#000"></div>
<div class="a " style="left:758px;top:365px;width:4px;height:1px;background:#000"></div>
<div class="a " style="left:758px;top:382px;width:4px;height:1px;background:#000"></div>
<div class="a " style="left:758px;top:399px;width:4px;height:1px;background:#000"></div>
<div class="a " style="left:758px;top:416px;width:4px;height:1px;background:#000"></div>
<div class="a " style="left:758px;top:434px;width:4px;height:1px;background:#000"></div>
<div class="a " style="left:758px;top:451px;width:4px;height:1px;background:#000"></div>
<div class="a " style="left:758px;top:468px;width:4px;height:1px;background:#000"></div>
<div class="a " style="left:758px;top:485px;width:4px;height:1px;background:#000"></div>
<div class="a " style="left:758px;top:502px;width:4px;height:1px;background:#000"></div>
<svg style="left:737px;top:273px" width="22" height="12" viewBox="0 0 22 12" ><path d="M0.5 0.5h14l6 5.5-6 5.5h-14z" fill="#d4d0c8" stroke="none"/><path d="M0.5 11V0.5h14l6 5.5" fill="none" stroke="#fff"/><path d="M0 11.5h14.5l6-5.5" fill="none" stroke="#404040"/><path d="M1 10.5h13l5-4.5" fill="none" stroke="#808080"/></svg>
<div class="a " style="left:490px;top:265px;width:160px;height:156px;background:#fff;box-shadow:inset 1px 1px #808080,inset 2px 2px #404040,inset -1px -1px #fff,inset -2px -2px #d4d0c8"></div>
<div class="a " style="left:494px;top:269px;width:153px;height:30px;background:#d4d0c8"></div>
<div class="a raised2" style="left:498px;top:277px;width:21px;height:16px;"></div>
<svg style="left:498px;top:277px" width="21" height="16" viewBox="0 0 21 16" ><path d="M11 4v7l-3.5-3.5z" fill="#000"/></svg>
<div class="a raised2" style="left:622px;top:277px;width:21px;height:16px;"></div>
<svg style="left:622px;top:277px" width="21" height="16" viewBox="0 0 21 16" ><path d="M9 4v7l3.5-3.5z" fill="#000"/></svg>
<div class="t " style="left:542px;top:279px;font-weight:bold;font-size:12px;letter-spacing:-0.2px">2025</div>
<svg style="left:569px;top:279px" width="11" height="10" viewBox="0 0 11 10" shape-rendering="crispEdges"><g fill="#000"><rect x="3" y="0" width="1" height="1"/><rect x="2" y="1" width="8" height="1"/><rect x="2" y="2" width="1" height="1"/><rect x="5" y="2" width="2" height="1"/><rect x="1" y="3" width="2" height="1"/><rect x="5" y="3" width="2" height="1"/><rect x="1" y="4" width="9" height="1"/><rect x="2" y="5" width="1" height="1"/><rect x="5" y="5" width="2" height="1"/><rect x="2" y="6" width="1" height="1"/><rect x="5" y="6" width="2" height="1"/><rect x="0" y="7" width="11" height="1"/><rect x="5" y="8" width="2" height="1"/><rect x="5" y="9" width="2" height="1"/></g></svg>
<svg style="left:576px;top:280px" width="9" height="8" viewBox="0 0 9 8" shape-rendering="crispEdges"><g fill="#000"><rect x="0" y="0" width="9" height="1"/><rect x="7" y="1" width="2" height="1"/><rect x="7" y="2" width="1" height="1"/><rect x="6" y="3" width="2" height="1"/><rect x="6" y="4" width="2" height="1"/><rect x="6" y="5" width="1" height="1"/><rect x="5" y="6" width="2" height="1"/><rect x="5" y="7" width="2" height="1"/></g></svg>
<svg style="left:587px;top:279px" width="9" height="10" viewBox="0 0 9 10" shape-rendering="crispEdges"><g fill="#000"><rect x="1" y="0" width="8" height="1"/><rect x="1" y="1" width="1" height="1"/><rect x="7" y="1" width="2" height="1"/><rect x="1" y="2" width="1" height="1"/><rect x="7" y="2" width="2" height="1"/><rect x="1" y="3" width="8" height="1"/><rect x="1" y="4" width="1" height="1"/><rect x="7" y="4" width="2" height="1"/><rect x="1" y="5" width="1" height="1"/><rect x="7" y="5" width="2" height="1"/><rect x="1" y="6" width="8" height="1"/><rect x="0" y="7" width="2" height="1"/><rect x="7" y="7" width="2" height="1"/><rect x="0" y="8" width="1" height="1"/><rect x="7" y="8" width="2" height="1"/><rect x="0" y="9" width="1" height="1"/><rect x="5" y="9" width="4" height="1"/></g></svg>
<svg style="left:505px;top:304px" width="10" height="5" viewBox="0 0 10 5" shape-rendering="crispEdges"><g fill="#000"><rect x="0" y="4" width="10" height="1"/></g></svg>
<svg style="left:525px;top:304px" width="10" height="8" viewBox="0 0 10 8" shape-rendering="crispEdges"><g fill="#000"><rect x="1" y="1" width="8" height="1"/><rect x="0" y="7" width="10" height="1"/></g></svg>
<svg style="left:545px;top:304px" width="10" height="8" viewBox="0 0 10 8" shape-rendering="crispEdges"><g fill="#000"><rect x="1" y="0" width="8" height="1"/><rect x="1" y="3" width="8" height="1"/><rect x="0" y="7" width="10" height="1"/></g></svg>
<svg style="left:566px;top:304px" width="8" height="9" viewBox="0 0 8 9" shape-rendering="crispEdges"><g fill="#000"><rect x="0" y="0" width="8" height="1"/><rect x="0" y="1" width="1" height="1"/><rect x="2" y="1" width="1" height="1"/><rect x="4" y="1" width="2" height="1"/><rect x="7" y="1" width="1" height="1"/><rect x="0" y="2" width="1" height="1"/><rect x="2" y="2" width="1" height="1"/><rect x="4" y="2" width="2" height="1"/><rect x="7" y="2" width="1" height="1"/><rect x="0" y="3" width="1" height="1"/><rect x="2" y="3" width="1" height="1"/><rect x="4" y="3" width="2" height="1"/><rect x="7" y="3" width="1" height="1"/><rect x="0" y="4" width="3" height="1"/><rect x="5" y="4" width="3" height="1"/><rect x="0" y="5" width="1" height="1"/><rect x="7" y="5" width="1" height="1"/><rect x="0" y="6" width="1" height="1"/><rect x="7" y="6" width="1" height="1"/><rect x="0" y="7" width="8" height="1"/><rect x="0" y="8" width="1" height="1"/><rect x="7" y="8" width="1" height="1"/></g></svg>
<svg style="left:585px;top:304px" width="10" height="9" viewBox="0 0 10 9" shape-rendering="crispEdges"><g fill="#000"><rect x="1" y="0" width="8" height="1"/><rect x="3" y="1" width="2" height="1"/><rect x="3" y="2" width="2" height="1"/><rect x="1" y="3" width="7" height="1"/><rect x="3" y="4" width="2" height="1"/><rect x="7" y="4" width="1" height="1"/><rect x="3" y="5" width="2" height="1"/><rect x="7" y="5" width="1" height="1"/><rect x="3" y="6" width="2" height="1"/><rect x="7" y="6" width="1" height="1"/><rect x="2" y="7" width="3" height="1"/><rect x="7" y="7" width="1" height="1"/><rect x="0" y="8" width="10" height="1"/></g></svg>
<svg style="left:605px;top:304px" width="10" height="9" viewBox="0 0 10 9" shape-rendering="crispEdges"><g fill="#000"><rect x="4" y="0" width="2" height="1"/><rect x="0" y="2" width="10" height="1"/><rect x="3" y="4" width="1" height="1"/><rect x="6" y="4" width="1" height="1"/><rect x="2" y="5" width="1" height="1"/><rect x="7" y="5" width="1" height="1"/><rect x="1" y="6" width="2" height="1"/><rect x="7" y="6" width="2" height="1"/><rect x="1" y="7" width="2" height="1"/><rect x="7" y="7" width="2" height="1"/><rect x="1" y="8" width="1" height="1"/><rect x="8" y="8" width="1" height="1"/></g></svg>
<svg style="left:626px;top:304px" width="8" height="9" viewBox="0 0 8 9" shape-rendering="crispEdges"><g fill="#000"><rect x="0" y="0" width="8" height="1"/><rect x="0" y="1" width="2" height="1"/><rect x="6" y="1" width="2" height="1"/><rect x="0" y="2" width="2" height="1"/><rect x="6" y="2" width="2" height="1"/><rect x="0" y="3" width="8" height="1"/><rect x="0" y="4" width="2" height="1"/><rect x="6" y="4" width="2" height="1"/><rect x="0" y="5" width="2" height="1"/><rect x="6" y="5" width="2" height="1"/><rect x="0" y="6" width="2" height="1"/><rect x="6" y="6" width="2" height="1"/><rect x="0" y="7" width="8" height="1"/><rect x="0" y="8" width="2" height="1"/><rect x="6" y="8" width="2" height="1"/></g></svg>
<svg style="left:520px;top:345px" width="21" height="13"><ellipse cx="10.5" cy="6.5" rx="10" ry="6.5" fill="#c8c4bc"/></svg>
<div class="t" style="left:500px;top:320px;width:20px;text-align:center;font-size:10px;line-height:11px;color:#808080;">30</div>
<div class="t" style="left:520px;top:320px;width:20px;text-align:center;font-size:10px;line-height:11px;">1</div>
<div class="t" style="left:540px;top:320px;width:20px;text-align:center;font-size:10px;line-height:11px;">2</div>
<div class="t" style="left:560px;top:320px;width:20px;text-align:center;font-size:10px;line-height:11px;">3</div>
<div class="t" style="left:580px;top:320px;width:20px;text-align:center;font-size:10px;line-height:11px;">4</div>
<div class="t" style="left:600px;top:320px;width:20px;text-align:center;font-size:10px;line-height:11px;">5</div>
<div class="t" style="left:620px;top:320px;width:20px;text-align:center;font-size:10px;line-height:11px;">6</div>
<div class="t" style="left:500px;top:333px;width:20px;text-align:center;font-size:10px;line-height:11px;">7</div>
<div class="t" style="left:520px;top:333px;width:20px;text-align:center;font-size:10px;line-height:11px;">8</div>
<div class="t" style="left:540px;top:333px;width:20px;text-align:center;font-size:10px;line-height:11px;">9</div>
<div class="t" style="left:560px;top:333px;width:20px;text-align:center;font-size:10px;line-height:11px;">10</div>
<div class="t" style="left:580px;top:333px;width:20px;text-align:center;font-size:10px;line-height:11px;">11</div>
<div class="t" style="left:600px;top:333px;width:20px;text-align:center;font-size:10px;line-height:11px;">12</div>
<div class="t" style="left:620px;top:333px;width:20px;text-align:center;font-size:10px;line-height:11px;">13</div>
<div class="t" style="left:500px;top:346px;width:20px;text-align:center;font-size:10px;line-height:11px;">14</div>
<div class="t" style="left:520px;top:346px;width:20px;text-align:center;font-size:10px;line-height:11px;">15</div>
<div class="t" style="left:540px;top:346px;width:20px;text-align:center;font-size:10px;line-height:11px;">16</div>
<div class="t" style="left:560px;top:346px;width:20px;text-align:center;font-size:10px;line-height:11px;">17</div>
<div class="t" style="left:580px;top:346px;width:20px;text-align:center;font-size:10px;line-height:11px;">18</div>
<div class="t" style="left:600px;top:346px;width:20px;text-align:center;font-size:10px;line-height:11px;">19</div>
<div class="t" style="left:620px;top:346px;width:20px;text-align:center;font-size:10px;line-height:11px;">20</div>
<div class="t" style="left:500px;top:359px;width:20px;text-align:center;font-size:10px;line-height:11px;">21</div>
<div class="t" style="left:520px;top:359px;width:20px;text-align:center;font-size:10px;line-height:11px;">22</div>
<div class="t" style="left:540px;top:359px;width:20px;text-align:center;font-size:10px;line-height:11px;">23</div>
<div class="t" style="left:560px;top:359px;width:20px;text-align:center;font-size:10px;line-height:11px;">24</div>
<div class="t" style="left:580px;top:359px;width:20px;text-align:center;font-size:10px;line-height:11px;">25</div>
<div class="t" style="left:600px;top:359px;width:20px;text-align:center;font-size:10px;line-height:11px;">26</div>
<div class="t" style="left:620px;top:359px;width:20px;text-align:center;font-size:10px;line-height:11px;">27</div>
<div class="t" style="left:500px;top:372px;width:20px;text-align:center;font-size:10px;line-height:11px;">28</div>
<div class="t" style="left:520px;top:372px;width:20px;text-align:center;font-size:10px;line-height:11px;">29</div>
<div class="t" style="left:540px;top:372px;width:20px;text-align:center;font-size:10px;line-height:11px;">30</div>
<div class="t" style="left:560px;top:372px;width:20px;text-align:center;font-size:10px;line-height:11px;">31</div>
<div class="t" style="left:580px;top:372px;width:20px;text-align:center;font-size:10px;line-height:11px;color:#808080;">1</div>
<div class="t" style="left:600px;top:372px;width:20px;text-align:center;font-size:10px;line-height:11px;color:#808080;">2</div>
<div class="t" style="left:620px;top:372px;width:20px;text-align:center;font-size:10px;line-height:11px;color:#808080;">3</div>
<div class="t" style="left:500px;top:385px;width:20px;text-align:center;font-size:10px;line-height:11px;color:#808080;">4</div>
<div class="t" style="left:520px;top:385px;width:20px;text-align:center;font-size:10px;line-height:11px;color:#808080;">5</div>
<div class="t" style="left:540px;top:385px;width:20px;text-align:center;font-size:10px;line-height:11px;color:#808080;">6</div>
<div class="t" style="left:560px;top:385px;width:20px;text-align:center;font-size:10px;line-height:11px;color:#808080;">7</div>
<div class="t" style="left:580px;top:385px;width:20px;text-align:center;font-size:10px;line-height:11px;color:#808080;">8</div>
<div class="t" style="left:600px;top:385px;width:20px;text-align:center;font-size:10px;line-height:11px;color:#808080;">9</div>
<div class="t" style="left:620px;top:385px;width:20px;text-align:center;font-size:10px;line-height:11px;color:#808080;">10</div>
<div class="t " style="left:517px;top:405px;font-weight:bold;font-size:12px;letter-spacing:0.1px">Today: 2025-07-25</div>
<div class="t " style="left:405px;top:432px;">Sliders:</div>
<div class="a " style="left:403px;top:461px;width:334px;height:4px;box-shadow:inset 1px 1px #808080,inset 2px 2px #404040,inset -1px -1px #fff,inset -2px -2px #d4d0c8"></div>
<div class="a raised2" style="left:403px;top:453px;width:11px;height:21px;"></div>
<div class="a " style="left:403px;top:486px;width:334px;height:4px;box-shadow:inset 1px 1px #808080,inset 2px 2px #404040,inset -1px -1px #fff,inset -2px -2px #d4d0c8"></div>
<svg style="left:403px;top:479px" width="11" height="21" viewBox="0 0 11 21" ><path d="M0 0h11v15l-5.5 5.5L0 15z" fill="#d4d0c8"/><path d="M0.5 16V0.5h10" fill="none" stroke="#fff"/><path d="M10.5 0v15l-5 5" fill="none" stroke="#404040"/><path d="M9.5 1v13.5l-4.5 4.5" fill="none" stroke="#808080"/><path d="M0.5 15.5l5 5" fill="none" stroke="#fff"/></svg>
<div class="a " style="left:419px;top:500px;width:1px;height:3px;background:#000"></div>
<div class="a " style="left:436px;top:500px;width:1px;height:3px;background:#000"></div>
<div class="a " style="left:453px;top:500px;width:1px;height:3px;background:#000"></div>
<div class="a " style="left:469px;top:500px;width:1px;height:3px;background:#000"></div>
<div class="a " style="left:486px;top:498px;width:1px;height:4px;background:#000"></div>
<div class="a " style="left:503px;top:500px;width:1px;height:3px;background:#000"></div>
<div class="a " style="left:519px;top:500px;width:1px;height:3px;background:#000"></div>
<div class="a " style="left:536px;top:500px;width:1px;height:3px;background:#000"></div>
<div class="a " style="left:553px;top:500px;width:1px;height:3px;background:#000"></div>
<div class="a " style="left:569px;top:500px;width:1px;height:3px;background:#000"></div>
<div class="a " style="left:586px;top:500px;width:1px;height:3px;background:#000"></div>
<div class="a " style="left:603px;top:500px;width:1px;height:3px;background:#000"></div>
<div class="a " style="left:619px;top:500px;width:1px;height:3px;background:#000"></div>
<div class="a " style="left:636px;top:500px;width:1px;height:3px;background:#000"></div>
<div class="a " style="left:653px;top:498px;width:1px;height:4px;background:#000"></div>
<div class="a " style="left:669px;top:500px;width:1px;height:3px;background:#000"></div>
<div class="a " style="left:686px;top:500px;width:1px;height:3px;background:#000"></div>
<div class="a " style="left:703px;top:500px;width:1px;height:3px;background:#000"></div>
<div class="a " style="left:719px;top:500px;width:1px;height:3px;background:#000"></div>
<div class="a " style="left:736px;top:500px;width:1px;height:3px;background:#000"></div>
<div class="a dither" style="left:775px;top:145px;width:16px;height:446px;"></div>
<div class="a raised2" style="left:775px;top:145px;width:16px;height:15px;"></div>
<svg style="left:775px;top:145px" width="16" height="15" viewBox="0 0 16 15" ><path d="M4 9h7l-3.5-4z" fill="#000"/></svg>
<div class="a raised2" style="left:775px;top:160px;width:16px;height:356px;"></div>
<div class="a raised2" style="left:775px;top:575px;width:16px;height:16px;"></div>
<svg style="left:775px;top:575px" width="16" height="16" viewBox="0 0 16 16" ><path d="M4 6h7l-3.5 4z" fill="#000"/></svg>
</div>
</body></html>
